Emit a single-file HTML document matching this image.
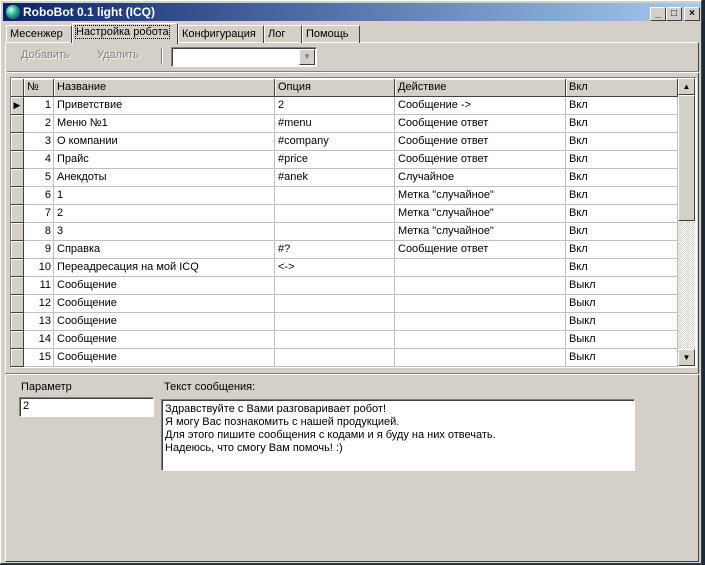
<!DOCTYPE html>
<html><head><meta charset="utf-8"><style>
*{box-sizing:border-box;margin:0;padding:0}
body{width:705px;height:565px;background:#1a2a3a;font-family:"Liberation Sans","DejaVu Sans",sans-serif;font-size:11px;color:#000;position:relative;overflow:hidden}
.win{position:absolute;left:0;top:0;width:702px;height:564px;background:#d4d0c8;border:1px solid #fff;border-right-color:#404040;border-bottom-color:#404040}
.title{position:absolute;left:2px;top:2px;width:697px;height:18px;background:linear-gradient(90deg,#0a246a,#a6caf0);color:#fff;font-weight:bold;font-size:12px;line-height:18px;padding-left:20px}
.ico{position:absolute;left:3px;top:2px;width:14px;height:14px;border-radius:50%;background:radial-gradient(circle at 35% 35%,#cfe,#2a8 45%,#135)}
.tb{position:absolute;top:4px;width:16px;height:14px;background:#d4d0c8;border:1px solid #fff;border-right-color:#404040;border-bottom-color:#404040;color:#000;font-size:10px;line-height:12px;text-align:center;font-weight:bold}
.abs{position:absolute}
.tab{position:absolute;top:24px;height:18px;border:1px solid #fff;border-right-color:#404040;border-bottom:none;line-height:16px;padding:0 3px;font-size:11px}
.page{position:absolute;left:4px;top:41px;width:694px;height:520px;border:1px solid #fff;border-right-color:#404040;border-bottom-color:#404040}
.grid{position:absolute;left:9px;top:76px;width:687px;height:291px;border:1px solid #808080;border-right-color:#fff;border-bottom-color:#fff;background:#fff;overflow:hidden}
.row{position:absolute;left:0;height:18px;width:667px}
.c{position:absolute;top:0;height:18px;line-height:17px;padding-left:3px;border-right:1px solid #c0c0c0;border-bottom:1px solid #c0c0c0;white-space:nowrap;overflow:hidden}
.hd .c{background:#d4d0c8;border-right:1px solid #404040;border-bottom:1px solid #404040;box-shadow:inset 1px 1px #fff}
.ind{background:#d4d0c8;border-right:1px solid #404040 !important;border-bottom:1px solid #404040 !important;box-shadow:inset 1px 1px #fff}
.num{text-align:right;padding-right:2px}
.btn{background:#d4d0c8;border:1px solid #fff;border-right-color:#404040;border-bottom-color:#404040}
.in{position:absolute;background:#fff;border:1px solid #808080;border-right-color:#fff;border-bottom-color:#fff;box-shadow:inset 1px 1px #404040}
</style></head><body>
<div class="win">
<div class="title"><div class="ico"></div>RoboBot 0.1 light (ICQ)
<div class="tb" style="left:647px">_</div><div class="tb" style="left:663px">□</div><div class="tb" style="left:681px">×</div></div>
<div class="page"></div>
<div class="tab" style="left:5px;width:66px">Месенжер</div>
<div class="tab" style="left:71px;top:22px;height:21px;width:106px;background:#d4d0c8"><span style="outline:1px dotted #000">Настройка робота</span></div>
<div class="tab" style="left:177px;width:86px">Конфигурация</div>
<div class="tab" style="left:263px;width:38px">Лог</div>
<div class="tab" style="left:301px;width:58px">Помощь</div>
<div class="abs" style="left:20px;top:48px;color:#808080;text-shadow:1px 1px #fff">Добавить</div>
<div class="abs" style="left:96px;top:48px;color:#808080;text-shadow:1px 1px #fff">Удалить</div>
<div class="abs" style="left:160px;top:47px;width:2px;height:16px;border-left:1px solid #808080;border-right:1px solid #fff"></div>
<div class="in" style="left:170px;top:46px;width:146px;height:20px"><div class="btn" style="position:absolute;right:1px;top:1px;width:16px;height:16px;font-size:8px;color:#808080;text-align:center;line-height:14px">▼</div></div>
<div class="abs" style="left:6px;top:70px;width:692px;height:2px;border-top:1px solid #808080;border-bottom:1px solid #fff"></div>
<div class="grid" id="g">
<div class="row hd" style="top:1px"><div class="c" style="left:0;width:13px"></div><div class="c" style="left:13px;width:30px">№</div><div class="c" style="left:43px;width:221px">Название</div><div class="c" style="left:264px;width:120px">Опция</div><div class="c" style="left:384px;width:171px">Действие</div><div class="c" style="left:555px;width:112px">Вкл</div></div>
</div>
<div class="abs" style="left:677px;top:77px;width:17px;height:288px;background:repeating-conic-gradient(#fff 0 25%,#d4d0c8 0 50%) 0 0/2px 2px">
<div class="btn abs" style="left:0;top:0;width:17px;height:17px;font-size:8px;text-align:center;line-height:15px">▲</div>
<div class="btn abs" style="left:0;top:17px;width:17px;height:126px"></div>
<div class="btn abs" style="left:0;top:271px;width:17px;height:17px;font-size:8px;text-align:center;line-height:15px">▼</div>
</div>
<div class="abs" style="left:4px;top:372px;width:694px;height:2px;border-top:1px solid #808080;border-bottom:1px solid #fff"></div>
<div class="abs" style="left:20px;top:380px">Параметр</div>
<div class="abs" style="left:163px;top:380px">Текст сообщения:</div>
<div class="in" style="left:18px;top:396px;width:135px;height:20px;padding:2px 3px">2</div>
<div class="in" style="left:160px;top:398px;width:474px;height:72px;padding:3px 3px;line-height:13px">Здравствуйте с Вами разговаривает робот!<br>Я могу Вас познакомить с нашей продукцией.<br>Для этого пишите сообщения с кодами и я буду на них отвечать.<br>Надеюсь, что смогу Вам помочь! :)</div>
</div>
<script>
var d=[["1","Приветствие","2","Сообщение ->","Вкл"],["2","Меню №1","#menu","Сообщение ответ","Вкл"],["3","О компании","#company","Сообщение ответ","Вкл"],["4","Прайс","#price","Сообщение ответ","Вкл"],["5","Анекдоты","#anek","Случайное","Вкл"],["6","1","","Метка \"случайное\"","Вкл"],["7","2","","Метка \"случайное\"","Вкл"],["8","3","","Метка \"случайное\"","Вкл"],["9","Справка","#?","Сообщение ответ","Вкл"],["10","Переадресация на мой ICQ","<->","","Вкл"],["11","Сообщение","","","Выкл"],["12","Сообщение","","","Выкл"],["13","Сообщение","","","Выкл"],["14","Сообщение","","","Выкл"],["15","Сообщение","","","Выкл"]];
var g=document.getElementById('g'),h='';
function e(s){return s.replace(/&/g,'&amp;').replace(/</g,'&lt;').replace(/>/g,'&gt;')}
d.forEach(function(r,i){h+='<div class="row" style="top:'+(19+i*18)+'px"><div class="c ind" style="left:0;width:13px;padding:0;font-size:9px;line-height:17px;text-align:center">'+(i==0?'▶':'')+'</div><div class="c num" style="left:13px;width:30px">'+r[0]+'</div><div class="c" style="left:43px;width:221px">'+e(r[1])+'</div><div class="c" style="left:264px;width:120px">'+e(r[2])+'</div><div class="c" style="left:384px;width:171px">'+e(r[3])+'</div><div class="c" style="left:555px;width:112px">'+r[4]+'</div></div>'});
g.insertAdjacentHTML('beforeend',h);
</script>
</body></html>
